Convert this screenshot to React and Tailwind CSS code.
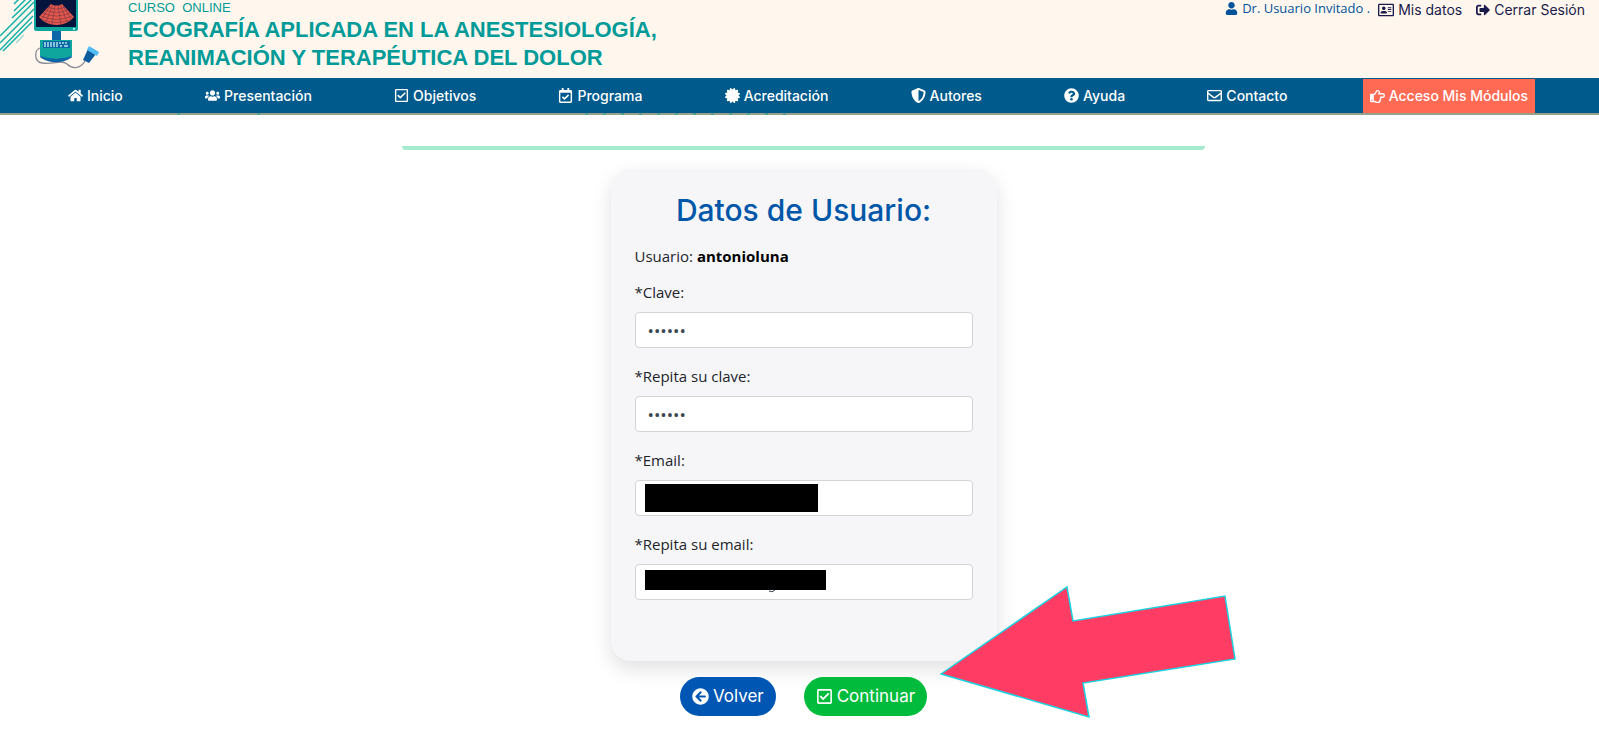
import { useState } from "react";
import {
  FaArrowCircleLeft,
  FaCertificate,
  FaHome,
  FaQuestionCircle,
  FaRegAddressCard,
  FaRegCalendarCheck,
  FaRegCheckSquare,
  FaRegEnvelope,
  FaRegHandPointRight,
  FaShieldAlt,
  FaSignOutAlt,
  FaUser,
  FaUsers
} from "react-icons/fa";

const navItems = [
  { label: "Inicio", icon: FaHome },
  { label: "Presentación", icon: FaUsers },
  { label: "Objetivos", icon: FaRegCheckSquare },
  { label: "Programa", icon: FaRegCalendarCheck },
  { label: "Acreditación", icon: FaCertificate },
  { label: "Autores", icon: FaShieldAlt },
  { label: "Ayuda", icon: FaQuestionCircle },
  { label: "Contacto", icon: FaRegEnvelope }
];

/* Ultrasound machine with the diagonal lines behind it */
function Logo() {
  return (
    <svg width="100" height="78" viewBox="0 0 100 78" fill="none" aria-hidden="true">
      <g stroke="#12b0a8" strokeWidth="1.5">
        <path d="M14 4 19 -1M14 11 26 -1M12 18 32 -1M0 36 34 2M0 43 34 9M0 50 33 16M3 51 32 22" />
        <path d="M16 43 24 35" opacity="0.4" />
      </g>
      <path d="M40 48c-6 2-6 14 2 15 12 2 19-4 25 1 6 6 14 4 18-3" stroke="#8a8a96" strokeWidth="1.3" />
      <rect x="34" y="-6" width="44" height="37" rx="2" fill="#0fa79d" />
      <rect x="36" y="-6" width="40" height="33" fill="#05143d" />
      <circle cx="74" cy="29" r="1" fill="#d8fff8" />
      <path d="M39 17 51 4q5.500 3 11 0l12 13q-7 8-17.500 8T39 17z" fill="#e2574c" />
      <g stroke="#05143d" strokeWidth="0.4" opacity="0.7">
        <path d="M48 7q8.500 4 17 0M46 10q10.500 5 21 0M43 13q13.500 6 27 0M41 16q15.500 7 31 0M43 20q13.500 5 27 0" />
        <path d="M53 4 46 22M55 5 52 25M58 5 61 25M60 4 67 22M50 6 42 19M63 6 71 19" />
      </g>
      <path d="M52 31h9v10h-9z" fill="#0d66a5" />
      <path d="M41 55q15 8 30 0v2q-15 9-30 0z" fill="#0d66a5" stroke="#0d66a5" strokeWidth="1.5" />
      <path d="M40 40h32v16q-16 5-32 0z" fill="#0fa79d" />
      <path d="M43 41h27v7H43z" fill="#0d66a5" />
      <path d="M45 42v5M48 42v5M51 42v5M54 42v5M57 42v5M60 42v2M63 42v2M66 42v2M60 46h2M64 46h4" stroke="#b8e8ef" strokeWidth="1.4" />
      <path d="m88 49 8 5-7 9-6-3z" fill="#0d5c9e" />
      <path d="m89 46 10 6-2 4-10-6z" fill="#52bdf5" />
    </svg>
  );
}

function Field({ id, label, type, value, onChange, children }) {
  return (
    <div className="mb-4">
      <label htmlFor={id} className="mb-2 block leading-6">
        {label}
      </label>
      <div className="relative">
        <input
          id={id}
          type={type}
          value={value}
          onChange={onChange}
          className="block h-9 w-full rounded-sm border border-[#d3d4da] bg-white px-3 text-[17px] text-[#3b4650]"
        />
        {children}
      </div>
    </div>
  );
}

export default function App() {

  const [form, setForm] = useState({
    clave: "123456",
    clave2: "123456",
    email: "",
    email2: ""
  });

  const handleChange = (e) => {
    setForm({ ...form, [e.target.id]: e.target.value });
  };

  return (
    <div className="bg-white font-['Open_Sans',sans-serif] text-[15px] text-[#212529]">

      {/* Header */}
      <header className="flex h-[78px] items-start justify-between overflow-hidden bg-[#fff7ed]">

        <div className="flex">
          <Logo />
          <div className="ml-7 font-['Liberation_Sans',sans-serif] text-[#009b98]">
            <p className="text-[13px] leading-4">CURSO&nbsp; ONLINE</p>
            <h1 className="text-[22px] font-bold leading-7">
              ECOGRAFÍA APLICADA EN LA ANESTESIOLOGÍA,
              <br />
              REANIMACIÓN Y TERAPÉUTICA DEL DOLOR
            </h1>
          </div>
        </div>

        <div className="flex pr-[14px] font-['Inter',sans-serif] text-sm leading-5 text-[#1b1b4b]">
          <span className="mr-2 flex h-4 items-center gap-1 font-['Open_Sans',sans-serif] text-[13px] leading-4 text-[#00529b]">
            <FaUser size={13} />
            Dr. Usuario Invitado .
          </span>
          <a href="#datos" className="mr-[14px] flex items-center gap-1">
            <FaRegAddressCard size={16} />
            Mis datos
          </a>
          <a href="#salir" className="flex items-center gap-1">
            <FaSignOutAlt size={14} />
            Cerrar Sesión
          </a>
        </div>

      </header>

      {/* Menu */}
      <nav className="flex h-[37px] justify-between border-b-2 border-[#98a08c] bg-[#005a8c] pl-[61px] pr-16 font-['Inter',sans-serif] text-sm font-medium text-white">
        {navItems.map(({ label, icon: Icon }) => (
          <a key={label} href={"#" + label} className="flex items-center gap-1 px-[7px]">
            <Icon size={15} />
            {label}
          </a>
        ))}
        <a href="#modulos" className="mt-px flex items-center gap-1 bg-[#ff6a55] px-[7px]">
          <FaRegHandPointRight size={15} />
          Acceso Mis Módulos
        </a>
      </nav>

      <main className="relative flex flex-col items-center pb-10 pl-2 pt-[31px]">

        <svg className="absolute -top-0.5 left-0" width="800" height="2" aria-hidden="true">
          <path d="M177 1h3M257 1h3M585 1H790" stroke="#4f9f93" strokeWidth="2" strokeDasharray="3 15" />
        </svg>

        <hr className="h-1 w-[803px] max-w-full rounded-b border-0 bg-[#a6ebd0]" />

        {/* User data */}
        <form className="mt-[19px] flex flex-col items-center" onSubmit={(e) => e.preventDefault()}>

          <div className="w-[386px] rounded-[20px] bg-[#f6f6f9] px-6 pb-[45px] pt-[19px] shadow-[0_8px_20px_rgba(0,0,0,0.12)]">

            <h2 className="text-center font-['Inter',sans-serif] text-[30px] font-medium leading-11 text-[#0057a8]">
              Datos de Usuario:
            </h2>

            <p className="mb-3 mt-3 leading-6">
              Usuario: <strong className="text-black">antonioluna</strong>
            </p>

            <Field id="clave" label="*Clave:" type="password" value={form.clave} onChange={handleChange} />
            <Field id="clave2" label="*Repita su clave:" type="password" value={form.clave2} onChange={handleChange} />

            <Field id="email" label="*Email:" type="email" value={form.email} onChange={handleChange}>
              <span className="absolute left-[10px] top-1 h-7 w-[173px] bg-black" />
            </Field>

            <Field id="email2" label="*Repita su email:" type="email" value={form.email2} onChange={handleChange}>
              <span className="absolute left-[10px] top-[6px] h-5 w-[181px] bg-black" />
              <svg className="absolute left-[133px] top-[26px]" width="8" height="3" aria-hidden="true">
                <path d="M1 1q3 2 6-1" fill="none" stroke="#3b4650" />
              </svg>
            </Field>

          </div>

          <div className="mt-4 flex gap-7 font-['Inter',sans-serif] text-[17px] text-white">
            <button type="button" className="flex h-[39px] items-center gap-1 rounded-full bg-[#0057b3] px-3">
              <FaArrowCircleLeft size={17} />
              Volver
            </button>
            <button type="submit" className="flex h-[39px] items-center gap-1 rounded-full bg-[#00bb3c] px-3">
              <FaRegCheckSquare size={17} />
              Continuar
            </button>
          </div>

        </form>

        {/* Arrow that points at the Continuar button */}
        <svg
          className="pointer-events-none absolute left-1/2 top-[470px] ml-[140px]"
          width="296"
          height="134"
          viewBox="0 0 296 134"
          aria-hidden="true"
        >
          <path
            d="M1 89 127 2 133 36 285 11 295 74 143 98 149 132z"
            fill="#ff3d64"
            stroke="#19d3e0"
            strokeWidth="1.5"
          />
        </svg>

      </main>
    </div>
  );
}
